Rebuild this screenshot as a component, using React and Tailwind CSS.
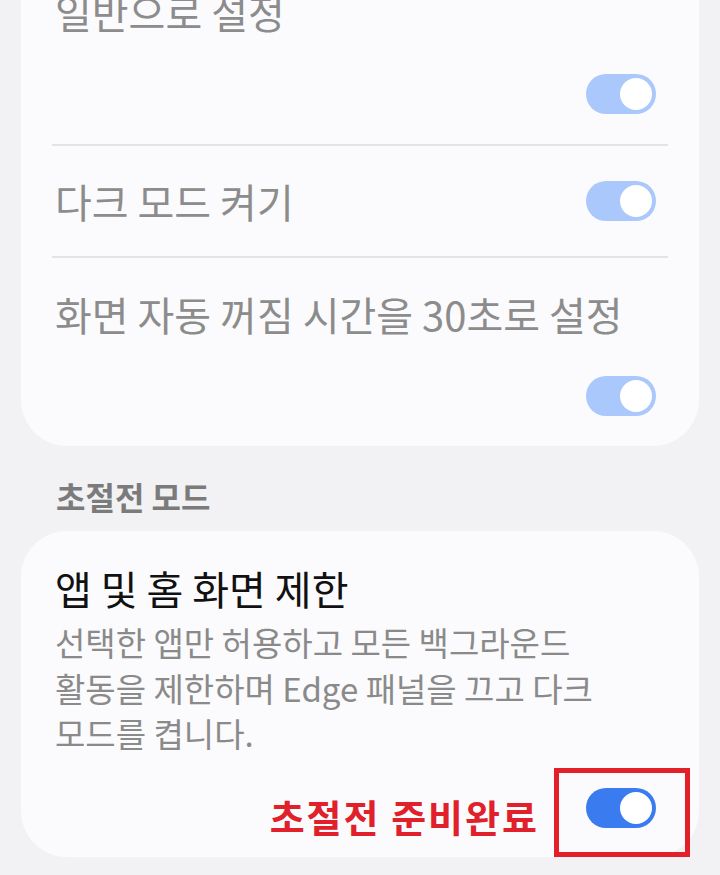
import React from "react";

function Toggle({ strong }) {
  return (
    <div
      className={
        "flex h-[40px] w-[70px] items-center justify-end rounded-full p-[4px] " +
        (strong ? "bg-[#3b7bf0]" : "bg-[#aac8fb]")
      }
    >
      <div className="h-[32px] w-[32px] rounded-full bg-white" />
    </div>
  );
}

export default function App() {
  return (
    <div
      className="min-h-[875px] w-[720px] overflow-hidden bg-[#f2f2f4] px-[21px]"
      style={{ fontFamily: '"Noto Sans CJK KR", "Noto Sans", sans-serif' }}
    >
      {/* Top card (scrolled) */}
      <div className="-mt-[12px] rounded-b-[46px] bg-[#fbfbfd]">
        <div className="pl-[34px] pr-[43px] pb-[30px]">
          <div className="text-[40px] leading-[48px] text-[#8c8c8c]">일반으로 설정</div>
          <div className="mt-[38px] flex justify-end">
            <Toggle />
          </div>
        </div>
        <div className="mx-[31px] h-[2px] bg-[#e3e3e5]" />
        <div className="flex h-[110px] items-center justify-between pl-[34px] pr-[43px]">
          <div className="text-[40px] leading-[48px] text-[#8c8c8c]">다크 모드 켜기</div>
          <Toggle />
        </div>
        <div className="mx-[31px] h-[2px] bg-[#e3e3e5]" />
        <div className="pl-[34px] pr-[43px] pt-[32px] pb-[30px]">
          <div className="whitespace-nowrap text-[40px] leading-[48px] text-[#8c8c8c]">
            화면 자동 꺼짐 시간을 30초로 설정
          </div>
          <div className="mt-[38px] flex justify-end">
            <Toggle />
          </div>
        </div>
      </div>

      {/* Section header */}
      <div className="pl-[35px] pt-[26px] text-[32px] font-bold leading-[48px] text-[#7b7b7b]">
        초절전 모드
      </div>

      {/* Card 2 */}
      <div className="mt-[11px] rounded-[46px] bg-[#fbfbfd] pl-[34px] pr-[43px] pt-[33px] pb-[29px]">
        <div className="text-[40px] leading-[48px] text-[#111111]">앱 및 홈 화면 제한</div>
        <div className="mt-[8px] whitespace-nowrap text-[33px] leading-[45.5px] text-[#8a8a8a]">
          선택한 앱만 허용하고 모든 백그라운드
          <br />
          활동을 제한하며 Edge 패널을 끄고 다크
          <br />
          모드를 켭니다.
        </div>
        <div className="mt-[31px] flex h-[40px] items-start justify-end gap-[47px]">
          <div className="mt-[8px] whitespace-nowrap text-[38px] font-bold leading-[40px] tracking-[2px] text-[#e0202a]">
            초절전 준비완료
          </div>
          <div className="relative">
            <Toggle strong />
            <span className="absolute -left-[32px] -right-[34px] -top-[20px] -bottom-[29px] border-[5px] border-[#e3202a]" />
          </div>
        </div>
      </div>
    </div>
  );
}
